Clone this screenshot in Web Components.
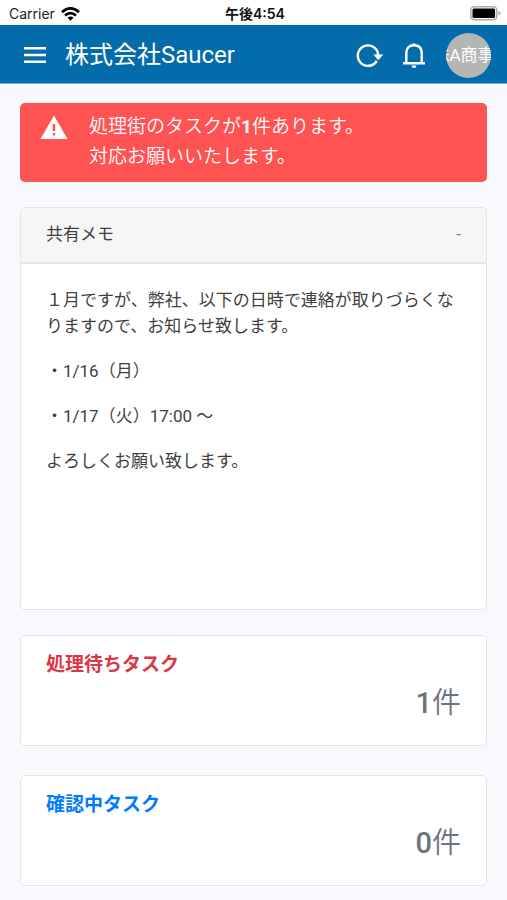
<!DOCTYPE html>
<html lang="ja">
<head>
<meta charset="utf-8">
<meta name="viewport" content="width=device-width, initial-scale=1">
<title>株式会社Saucer</title>
<style>
body { margin: 0; background: #f8f9fd; color: #3f3f3f; font: 17px/26px Roboto, "Noto Sans CJK JP", sans-serif; }
</style>
</head>
<body>
<app-shell>
  <status-bar slot="top" carrier="Carrier" time="午後4:54"></status-bar>
  <nav-bar slot="top" avatar="株A商事">株式会社Saucer</nav-bar>
  <alert-banner>処理街のタスクが<b>1</b>件あります。<br>対応お願いいたします。</alert-banner>
  <memo-card heading="共有メモ">
    <memo-line>１月ですが、弊社、以下の日時で連絡が取りづらくなりますので、お知らせ致します。</memo-line>
    <memo-line>・1/16（月）</memo-line>
    <memo-line>・1/17（火）17:00 〜</memo-line>
    <memo-line>よろしくお願い致します。</memo-line>
  </memo-card>
  <task-list>
    <task-card count="1" style="--accent:#dc3545">処理待ちタスク</task-card>
    <task-card count="0" style="--accent:#007bff">確認中タスク</task-card>
  </task-list>
</app-shell>
<script>
class Base extends HTMLElement {
  connectedCallback() {
    if (this.shadowRoot) return;
    this.attachShadow({ mode: 'open' }).innerHTML = this.render();
  }
}

customElements.define('app-shell', class extends Base {
  render() {
    return `<style>
      :host { display: block; }
      main { display: flex; flex-direction: column; gap: 25px; padding: 19px 20px 14px; }
    </style>
    <slot name="top"></slot><main><slot></slot></main>`;
  }
});

customElements.define('status-bar', class extends Base {
  render() {
    return `<style>
      :host { display: grid; grid-template-columns: 1fr auto 1fr; align-items: center; height: 25px; padding: 2px 6px 0 9px; box-sizing: border-box; background: #fff; color: #222; font: 14px/20px Inter, "Noto Sans CJK JP", sans-serif; }
      .left { display: flex; align-items: center; gap: 6px; }
      .time { font-weight: 600; color: #111; }
      .battery { justify-self: end; }
      svg { display: block; }
    </style>
    <span class="left">${this.getAttribute('carrier')}
      <svg width="19" height="14" viewBox="0 0 19 14" fill="none" stroke="#000" stroke-width="2.6"><path d="M1 5.2Q9.500-2.400 18 5.200M4 8.500Q9.500 3.700 15 8.500"/><path d="M9.500 13.700L6.500 10.700Q9.500 8.300 12.500 10.700Z" fill="#000" stroke="none"/></svg>
    </span>
    <span class="time">${this.getAttribute('time')}</span>
    <svg class="battery" width="31" height="15" viewBox="0 0 31 15"><rect x=".8" y=".8" width="26" height="13" rx="3.500" fill="#fff" stroke="#aaa" stroke-width="1.500"/><rect x="2.500" y="2.500" width="22.600" height="9.600" rx="1.500"/><path d="M28.500 5Q30.500 5.500 30.500 7.300T28.500 9.600Z" fill="#aaa"/></svg>`;
  }
});

customElements.define('nav-bar', class extends Base {
  render() {
    return `<style>
      :host { display: flex; align-items: center; height: 59px; padding: 2px 16px 0 23px; box-sizing: border-box; background: #046cab; color: #fff; border-bottom: 1px solid #75b4dc; }
      h1 { flex: 1; margin: 0 0 0 18px; font-size: 24px; line-height: 36px; font-weight: 400; }
      button { display: flex; padding: 0; border: 0; background: none; color: inherit; font: inherit; }
      .reload { margin-right: 18px; }
      .bell { margin-right: 20px; }
      .avatar { width: 45px; height: 45px; box-sizing: border-box; padding-right: 10px; border-radius: 50%; overflow: hidden; background: #b5b5b5; align-items: center; justify-content: center; font-size: 17px; white-space: nowrap; }
      svg { display: block; fill: none; stroke: currentColor; stroke-width: 2.4; }
    </style>
    <button aria-label="メニュー"><svg width="24" height="20" viewBox="0 0 24 20"><path d="M1 3.200H23M1 10H23M1 16.800H23"/></svg></button>
    <h1><slot></slot></h1>
    <button class="reload" aria-label="更新"><svg width="28" height="26" viewBox="0 0 28 26"><path d="M20.700 19A10.200 10.200 0 1 1 22.200 13"/><path d="M17.300 12.500H27.300L22.300 18.300Z" fill="currentColor" stroke="none"/></svg></button>
    <button class="bell" aria-label="通知"><svg width="24" height="28" viewBox="0 0 24 28"><path d="M1 22.200H23M4.300 22V12Q4.300 4.300 12 4.300T19.700 12V22"/><path d="M9.800 4A2.300 2.300 0 0 1 14.200 4ZM9.500 24.500H14.500Q14.300 27 12 27T9.500 24.500Z" fill="currentColor" stroke="none"/></svg></button>
    <button class="avatar">${this.getAttribute('avatar')}</button>`;
  }
});

customElements.define('alert-banner', class extends Base {
  render() {
    return `<style>
      :host { display: flex; gap: 21px; padding: 9px 20px 10px; border-radius: 5px; background: #ff5252; color: #fff; font-size: 19px; line-height: 30px; font-weight: 350; }
      svg { flex: none; margin-top: 3px; }
      ::slotted(b) { font-weight: 700; }
    </style>
    <svg width="28" height="25" viewBox="0 0 28 25" aria-hidden="true"><path d="M14 .5L27.500 24H.5Z" fill="#fff"/><path d="M12.800 9H15.200V16H12.800ZM12.800 18H15.200V20.500H12.800Z" fill="#ff5252"/></svg>
    <div role="alert"><slot></slot></div>`;
  }
});

customElements.define('memo-card', class extends Base {
  render() {
    return `<style>
      :host { display: block; border: 1px solid #e2e4e6; border-radius: 5px; background: #fff; overflow: hidden; }
      header { display: flex; align-items: center; justify-content: space-between; padding: 13px 25px 15px; border-bottom: 2px solid #e2e4e6; background: #f6f6f6; }
      h2 { margin: 0; font: inherit; }
      button { padding: 0; border: 0; background: none; color: #777; font: inherit; }
      .body { display: flex; flex-direction: column; gap: 19px; min-height: 322px; padding: 23px 25px 0; }
    </style>
    <header><h2>${this.getAttribute('heading')}</h2><button aria-label="折りたたむ">-</button></header>
    <div class="body"><slot></slot></div>`;
  }
});

customElements.define('memo-line', class extends Base {
  render() {
    return `<style>:host { display: block; }</style><slot></slot>`;
  }
});

customElements.define('task-list', class extends Base {
  render() {
    return `<style>:host { display: flex; flex-direction: column; gap: 29px; }</style><slot></slot>`;
  }
});

customElements.define('task-card', class extends Base {
  render() {
    return `<style>
      :host { display: block; padding: 14px 25px 20px; border: 1px solid #e2e4e6; border-radius: 5px; background: #fff; }
      h2 { margin: 0; color: var(--accent); font-size: 19px; line-height: 30px; font-weight: 700; }
      p { margin: 2px 0 0; text-align: right; color: #6c757d; font-size: 29px; line-height: 43px; font-weight: 350; }
      b { font-weight: 500; }
    </style>
    <h2><slot></slot></h2>
    <p><b>${this.getAttribute('count')}</b>件</p>`;
  }
});
</script>
</body>
</html>
